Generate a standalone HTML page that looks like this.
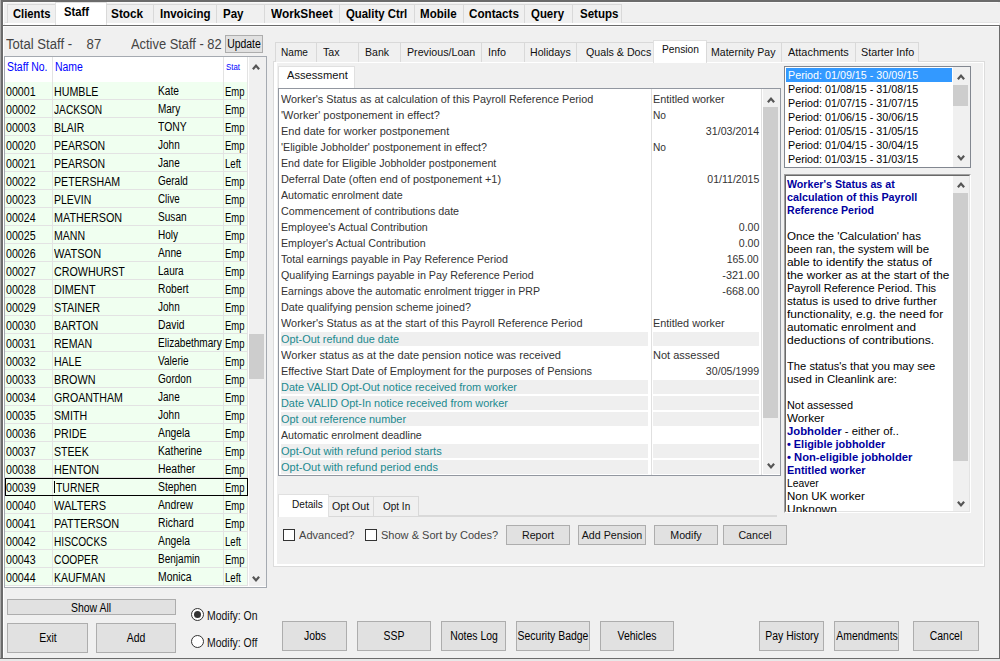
<!DOCTYPE html>
<html><head><meta charset="utf-8"><title>Staff</title>
<style>
*{box-sizing:border-box;margin:0;padding:0}
html,body{width:1000px;height:661px;overflow:hidden;background:#f0f0f0}
body{font-family:"Liberation Sans",sans-serif;font-size:11px;color:#000;position:relative}
.a{position:absolute}
.t{position:absolute;white-space:nowrap;transform-origin:0 50%}
.tab{position:absolute;border:1px solid #d9d9d9;background:#f0f0f0;white-space:nowrap;overflow:hidden}
.tt{top:4px;height:19px;font-weight:bold;font-size:13px;line-height:17px;padding-left:5px;border-bottom:none}
.it{top:42px;height:20px;font-size:11px;line-height:19px;padding-left:6px;border-bottom:none;color:#111}
.btn{position:absolute;border:1px solid #adadad;background:#e1e1e1;text-align:center;white-space:nowrap;font-size:12px;color:#000;overflow:hidden}
.row{position:absolute;left:5px;width:242px;height:18px;background:#f0fff0;border-bottom:1px solid #e3e3e3;font-size:12px;line-height:18px;color:#000}
.row span{position:absolute;top:1px;white-space:nowrap;transform-origin:0 50%}
.pr{position:absolute;left:279px;width:482px;height:16px;font-size:11px;line-height:16px;color:#333;white-space:nowrap}
.pr span{position:absolute;top:0;transform-origin:0 50%}
.g1{position:absolute;left:2px;top:1px;width:367px;height:14px;background:#efefef}
.g2{position:absolute;left:374px;top:1px;width:106px;height:14px;background:#efefef}
.hl{position:absolute;left:1px;height:13px;line-height:13px;font-size:11px;white-space:nowrap;color:#000;transform-origin:0 50%}
.hl b{color:#0000a0}
.pl{position:absolute;left:786px;width:166px;height:14px;line-height:14px;font-size:11px;padding-left:2px;white-space:nowrap;color:#000}
</style></head><body>

<div class="a" style="left:0;top:0;width:1000px;height:2px;background:#6b6b6b"></div>
<div class="a" style="left:0;top:0;width:1px;height:661px;background:#aaa"></div>
<div class="a" style="left:1px;top:0;width:2px;height:661px;background:#6b6b6b"></div>
<div class="a" style="left:3px;top:2px;width:1px;height:656px;background:#fff"></div>
<div class="a" style="left:3px;top:2px;width:995px;height:1px;background:#fafafa"></div>
<div class="a" style="left:0;top:658px;width:1000px;height:1px;background:#6b6b6b"></div>
<div class="a" style="left:0;top:659px;width:1000px;height:2px;background:#e8e8e8"></div>
<div class="a" style="left:999px;top:25px;width:1px;height:634px;background:#6b6b6b"></div>
<div class="a" style="left:5px;top:22px;width:994px;height:1px;background:#e4e4e4"></div>
<div class="a" style="left:5px;top:23px;width:994px;height:2px;background:#fff"></div>
<div class="a" style="left:3px;top:25px;width:997px;height:1px;background:#6b6b6b"></div>
<div class="a" style="left:4px;top:26px;width:995px;height:1px;background:#fbfbfb"></div>
<div class="tab tt" style="left:7px;width:50px"><span class="t" style="left:5.0px;top:0;transform:scaleX(0.863)">Clients</span></div>
<div class="tab tt" style="left:55px;width:52px;top:2px;height:23px;background:#fff;border-color:#e0e0e0;line-height:18px;padding-top:1px"><span class="t" style="left:7.6px;top:0;transform:scaleX(0.865)">Staff</span></div>
<div class="tab tt" style="left:106px;width:48px"><span class="t" style="left:4.4px;top:0;transform:scaleX(0.909)">Stock</span></div>
<div class="tab tt" style="left:153px;width:64px"><span class="t" style="left:6.0px;top:0;transform:scaleX(0.885)">Invoicing</span></div>
<div class="tab tt" style="left:216px;width:49px"><span class="t" style="left:6.2px;top:0;transform:scaleX(0.886)">Pay</span></div>
<div class="tab tt" style="left:264px;width:76px"><span class="t" style="left:6.4px;top:0;transform:scaleX(0.910)">WorkSheet</span></div>
<div class="tab tt" style="left:339px;width:76px"><span class="t" style="left:5.8px;top:0;transform:scaleX(0.874)">Quality Ctrl</span></div>
<div class="tab tt" style="left:414px;width:50px"><span class="t" style="left:5.4px;top:0;transform:scaleX(0.889)">Mobile</span></div>
<div class="tab tt" style="left:463px;width:62px"><span class="t" style="left:5.0px;top:0;transform:scaleX(0.899)">Contacts</span></div>
<div class="tab tt" style="left:524px;width:49px"><span class="t" style="left:6.0px;top:0;transform:scaleX(0.878)">Query</span></div>
<div class="tab tt" style="left:572px;width:50px"><span class="t" style="left:6.5px;top:0;transform:scaleX(0.888)">Setups</span></div>
<div class="t" style="left:6px;top:35px;font-size:14px;line-height:18px;color:#444"><span style="display:inline-block;transform:scaleX(0.936);transform-origin:0 50%">Total Staff - &nbsp;&nbsp; 87</span></div>
<div class="t" style="left:131px;top:35px;font-size:14px;line-height:18px;color:#444"><span style="display:inline-block;transform:scaleX(0.920);transform-origin:0 50%">Active Staff - 82</span></div>
<div class="btn" style="left:225px;top:35px;width:38px;height:18px;line-height:16px;font-size:12px"><span style="position:absolute;left:50%;top:0;transform:translateX(-50%) scaleX(0.870)">Update</span></div>
<div class="a" style="left:4px;top:56px;width:263px;height:532px;background:#fff;border:1px solid #a5aab1"></div>
<div class="a" style="left:249px;top:57px;width:17px;height:529px;background:#f0f0f0"></div>
<div class="t" style="left:7px;top:59px;font-size:12px;line-height:16px;color:#0000ff"><span style="display:inline-block;transform:scaleX(0.870);transform-origin:0 50%">Staff No.</span></div>
<div class="t" style="left:55px;top:59px;font-size:12px;line-height:16px;color:#0000ff"><span style="display:inline-block;transform:scaleX(0.870);transform-origin:0 50%">Name</span></div>
<div class="t" style="left:226px;top:61px;font-size:9px;line-height:12px;color:#0000ff"><span style="display:inline-block;transform:scaleX(0.870);transform-origin:0 50%">Stat</span></div>
<div class="row" style="top:82px"><span style="left:1px;transform:scaleX(0.887)">00001</span><span style="left:49px;transform:scaleX(0.889)">HUMBLE</span><span style="left:153px;top:0;transform:scaleX(0.849)">Kate</span><span style="left:220px;transform:scaleX(0.790)">Emp</span></div>
<div class="row" style="top:100px"><span style="left:1px;transform:scaleX(0.887)">00002</span><span style="left:49px;transform:scaleX(0.850)">JACKSON</span><span style="left:153px;top:0;transform:scaleX(0.832)">Mary</span><span style="left:220px;transform:scaleX(0.790)">Emp</span></div>
<div class="row" style="top:118px"><span style="left:1px;transform:scaleX(0.887)">00003</span><span style="left:49px;transform:scaleX(0.871)">BLAIR</span><span style="left:153px;top:0;transform:scaleX(0.866)">TONY</span><span style="left:220px;transform:scaleX(0.790)">Emp</span></div>
<div class="row" style="top:136px"><span style="left:1px;transform:scaleX(0.887)">00020</span><span style="left:49px;transform:scaleX(0.872)">PEARSON</span><span style="left:153px;top:0;transform:scaleX(0.834)">John</span><span style="left:220px;transform:scaleX(0.790)">Emp</span></div>
<div class="row" style="top:154px"><span style="left:1px;transform:scaleX(0.887)">00021</span><span style="left:49px;transform:scaleX(0.872)">PEARSON</span><span style="left:153px;top:0;transform:scaleX(0.834)">Jane</span><span style="left:220px;transform:scaleX(0.799)">Left</span></div>
<div class="row" style="top:172px"><span style="left:1px;transform:scaleX(0.887)">00022</span><span style="left:49px;transform:scaleX(0.885)">PETERSHAM</span><span style="left:153px;top:0;transform:scaleX(0.830)">Gerald</span><span style="left:220px;transform:scaleX(0.790)">Emp</span></div>
<div class="row" style="top:190px"><span style="left:1px;transform:scaleX(0.887)">00023</span><span style="left:49px;transform:scaleX(0.874)">PLEVIN</span><span style="left:153px;top:0;transform:scaleX(0.814)">Clive</span><span style="left:220px;transform:scaleX(0.790)">Emp</span></div>
<div class="row" style="top:208px"><span style="left:1px;transform:scaleX(0.887)">00024</span><span style="left:49px;transform:scaleX(0.899)">MATHERSON</span><span style="left:153px;top:0;transform:scaleX(0.843)">Susan</span><span style="left:220px;transform:scaleX(0.790)">Emp</span></div>
<div class="row" style="top:226px"><span style="left:1px;transform:scaleX(0.887)">00025</span><span style="left:49px;transform:scaleX(0.880)">MANN</span><span style="left:153px;top:0;transform:scaleX(0.837)">Holy</span><span style="left:220px;transform:scaleX(0.790)">Emp</span></div>
<div class="row" style="top:244px"><span style="left:1px;transform:scaleX(0.887)">00026</span><span style="left:49px;transform:scaleX(0.918)">WATSON</span><span style="left:153px;top:0;transform:scaleX(0.845)">Anne</span><span style="left:220px;transform:scaleX(0.790)">Emp</span></div>
<div class="row" style="top:262px"><span style="left:1px;transform:scaleX(0.887)">00027</span><span style="left:49px;transform:scaleX(0.894)">CROWHURST</span><span style="left:153px;top:0;transform:scaleX(0.837)">Laura</span><span style="left:220px;transform:scaleX(0.790)">Emp</span></div>
<div class="row" style="top:280px"><span style="left:1px;transform:scaleX(0.887)">00028</span><span style="left:49px;transform:scaleX(0.902)">DIMENT</span><span style="left:153px;top:0;transform:scaleX(0.852)">Robert</span><span style="left:220px;transform:scaleX(0.790)">Emp</span></div>
<div class="row" style="top:298px"><span style="left:1px;transform:scaleX(0.887)">00029</span><span style="left:49px;transform:scaleX(0.900)">STAINER</span><span style="left:153px;top:0;transform:scaleX(0.834)">John</span><span style="left:220px;transform:scaleX(0.790)">Emp</span></div>
<div class="row" style="top:316px"><span style="left:1px;transform:scaleX(0.887)">00030</span><span style="left:49px;transform:scaleX(0.894)">BARTON</span><span style="left:153px;top:0;transform:scaleX(0.864)">David</span><span style="left:220px;transform:scaleX(0.790)">Emp</span></div>
<div class="row" style="top:334px"><span style="left:1px;transform:scaleX(0.887)">00031</span><span style="left:49px;transform:scaleX(0.879)">REMAN</span><span style="left:153px;top:0;transform:scaleX(0.838)">Elizabethmary</span><span style="left:220px;transform:scaleX(0.790)">Emp</span></div>
<div class="row" style="top:352px"><span style="left:1px;transform:scaleX(0.887)">00032</span><span style="left:49px;transform:scaleX(0.877)">HALE</span><span style="left:153px;top:0;transform:scaleX(0.842)">Valerie</span><span style="left:220px;transform:scaleX(0.790)">Emp</span></div>
<div class="row" style="top:370px"><span style="left:1px;transform:scaleX(0.887)">00033</span><span style="left:49px;transform:scaleX(0.902)">BROWN</span><span style="left:153px;top:0;transform:scaleX(0.837)">Gordon</span><span style="left:220px;transform:scaleX(0.790)">Emp</span></div>
<div class="row" style="top:388px"><span style="left:1px;transform:scaleX(0.887)">00034</span><span style="left:49px;transform:scaleX(0.883)">GROANTHAM</span><span style="left:153px;top:0;transform:scaleX(0.834)">Jane</span><span style="left:220px;transform:scaleX(0.790)">Emp</span></div>
<div class="row" style="top:406px"><span style="left:1px;transform:scaleX(0.887)">00035</span><span style="left:49px;transform:scaleX(0.886)">SMITH</span><span style="left:153px;top:0;transform:scaleX(0.834)">John</span><span style="left:220px;transform:scaleX(0.790)">Emp</span></div>
<div class="row" style="top:424px"><span style="left:1px;transform:scaleX(0.887)">00036</span><span style="left:49px;transform:scaleX(0.886)">PRIDE</span><span style="left:153px;top:0;transform:scaleX(0.859)">Angela</span><span style="left:220px;transform:scaleX(0.790)">Emp</span></div>
<div class="row" style="top:442px"><span style="left:1px;transform:scaleX(0.887)">00037</span><span style="left:49px;transform:scaleX(0.882)">STEEK</span><span style="left:153px;top:0;transform:scaleX(0.855)">Katherine</span><span style="left:220px;transform:scaleX(0.790)">Emp</span></div>
<div class="row" style="top:460px"><span style="left:1px;transform:scaleX(0.887)">00038</span><span style="left:49px;transform:scaleX(0.894)">HENTON</span><span style="left:153px;top:0;transform:scaleX(0.871)">Heather</span><span style="left:220px;transform:scaleX(0.790)">Emp</span></div>
<div class="row" style="top:478px"><span style="left:1px;transform:scaleX(0.887)">00039</span><span style="left:51px;transform:scaleX(0.868)">TURNER</span><span style="left:153px;top:0;transform:scaleX(0.863)">Stephen</span><span style="left:220px;transform:scaleX(0.790)">Emp</span></div>
<div class="row" style="top:496px"><span style="left:1px;transform:scaleX(0.887)">00040</span><span style="left:49px;transform:scaleX(0.919)">WALTERS</span><span style="left:153px;top:0;transform:scaleX(0.858)">Andrew</span><span style="left:220px;transform:scaleX(0.790)">Emp</span></div>
<div class="row" style="top:514px"><span style="left:1px;transform:scaleX(0.887)">00041</span><span style="left:49px;transform:scaleX(0.912)">PATTERSON</span><span style="left:153px;top:0;transform:scaleX(0.863)">Richard</span><span style="left:220px;transform:scaleX(0.790)">Emp</span></div>
<div class="row" style="top:532px"><span style="left:1px;transform:scaleX(0.887)">00042</span><span style="left:49px;transform:scaleX(0.845)">HISCOCKS</span><span style="left:153px;top:0;transform:scaleX(0.859)">Angela</span><span style="left:220px;transform:scaleX(0.799)">Left</span></div>
<div class="row" style="top:550px"><span style="left:1px;transform:scaleX(0.887)">00043</span><span style="left:49px;transform:scaleX(0.852)">COOPER</span><span style="left:153px;top:0;transform:scaleX(0.837)">Benjamin</span><span style="left:220px;transform:scaleX(0.790)">Emp</span></div>
<div class="row" style="top:568px"><span style="left:1px;transform:scaleX(0.887)">00044</span><span style="left:49px;transform:scaleX(0.874)">KAUFMAN</span><span style="left:153px;top:0;transform:scaleX(0.866)">Monica</span><span style="left:220px;transform:scaleX(0.799)">Left</span></div>
<div class="a" style="left:52px;top:57px;width:1px;height:529px;background:#e3e3e3"></div>
<div class="a" style="left:223px;top:57px;width:1px;height:529px;background:#e3e3e3"></div>
<div class="a" style="left:247px;top:57px;width:1px;height:529px;background:#e3e3e3"></div>
<div class="a" style="left:5px;top:478px;width:243px;height:18px;border:1px solid #000"></div>
<div class="a" style="left:54px;top:481px;width:1px;height:12px;background:#000"></div>
<div class="a" style="left:251.3px;top:63.1px"><svg width="10" height="8" viewBox="0 0 10 8" style="display:block"><path d="M1.9 6.3 L5 2.6 L8.1 6.3" fill="none" stroke="#555" stroke-width="2.2"/></svg></div>
<div class="a" style="left:251.3px;top:574.5px"><svg width="10" height="8" viewBox="0 0 10 8" style="display:block"><path d="M1.9 1.7 L5 5.4 L8.1 1.7" fill="none" stroke="#555" stroke-width="2.2"/></svg></div>
<div class="a" style="left:249px;top:334px;width:15px;height:45px;background:#cdcdcd"></div>
<div class="btn" style="left:7px;top:599px;width:169px;height:16px;line-height:16px"><span style="position:absolute;left:-1px;top:0;width:100%;height:100%"><span style="position:absolute;left:50%;top:0;transform:translateX(-50%) scaleX(0.870)">Show All</span></span></div>
<div class="btn" style="left:7px;top:623px;width:81px;height:30px;line-height:28px"><span style="position:absolute;left:50%;top:0;transform:translateX(-50%) scaleX(0.870)">Exit</span></div>
<div class="btn" style="left:96px;top:623px;width:80px;height:30px;line-height:28px"><span style="position:absolute;left:50%;top:0;transform:translateX(-50%) scaleX(0.870)">Add</span></div>
<div class="a" style="left:191px;top:608px;width:13px;height:13px;border:1px solid #333;border-radius:50%;background:#fff"></div>
<div class="a" style="left:194px;top:611px;width:7px;height:7px;border-radius:50%;background:#333"></div>
<div class="a" style="left:191px;top:635px;width:13px;height:13px;border:1px solid #333;border-radius:50%;background:#fff"></div>
<div class="t" style="left:207px;top:608px;font-size:12px;line-height:16px;color:#111"><span style="display:inline-block;transform:scaleX(0.870);transform-origin:0 50%">Modify: On</span></div>
<div class="t" style="left:207px;top:635px;font-size:12px;line-height:16px;color:#111"><span style="display:inline-block;transform:scaleX(0.870);transform-origin:0 50%">Modify: Off</span></div>
<div class="a" style="left:273px;top:61px;width:712px;height:506px;border:1px solid #dcdcdc;background:#fff"></div>
<div class="a" style="left:277px;top:63px;width:706px;height:501px;background:#f0f0f0"></div>
<div class="tab it" style="left:275px;width:42px"><span class="t" style="left:5.1px;top:0;transform:scaleX(0.917)">Name</span></div>
<div class="tab it" style="left:316px;width:43px"><span class="t" style="left:6.1px;top:0;transform:scaleX(0.969)">Tax</span></div>
<div class="tab it" style="left:358px;width:43px"><span class="t" style="left:6.1px;top:0;transform:scaleX(0.957)">Bank</span></div>
<div class="tab it" style="left:400px;width:82px"><span class="t" style="left:6.1px;top:0;transform:scaleX(0.970)">Previous/Loan</span></div>
<div class="tab it" style="left:481px;width:44px"><span class="t" style="left:5.5px;top:0;transform:scaleX(0.980)">Info</span></div>
<div class="tab it" style="left:524px;width:53px"><span class="t" style="left:5.0px;top:0;transform:scaleX(0.966)">Holidays</span></div>
<div class="tab it" style="left:576px;width:78px"><span class="t" style="left:8.5px;top:0;transform:scaleX(0.970)">Quals &amp; Docs</span></div>
<div class="tab it" style="left:653px;width:54px;top:40px;height:23px;background:#fff;border-color:#e0e0e0;line-height:17px"><span class="t" style="left:7.8px;top:0;transform:scaleX(0.930)">Pension</span></div>
<div class="tab it" style="left:706px;width:76px"><span class="t" style="left:4.2px;top:0;transform:scaleX(0.959)">Maternity Pay</span></div>
<div class="tab it" style="left:781px;width:75px"><span class="t" style="left:6.0px;top:0;transform:scaleX(0.994)">Attachments</span></div>
<div class="tab it" style="left:855px;width:64px"><span class="t" style="left:5.2px;top:0;transform:scaleX(0.978)">Starter Info</span></div>
<div class="tab" style="left:278px;top:66px;width:77px;height:23px;background:#fff;border-color:#e0e0e0;border-bottom:none;font-size:11px;line-height:17px;padding-left:8px;color:#111"><span style="display:inline-block;transform:scaleX(1.014);transform-origin:0 50%">Assessment</span></div>
<div class="a" style="left:278px;top:88px;width:503px;height:388px;background:#fff;border:1px solid #9297a0"></div>
<div class="a" style="left:651px;top:89px;width:1px;height:386px;background:#e0e0e0"></div>
<div class="a" style="left:761px;top:89px;width:1px;height:386px;background:#e0e0e0"></div>
<div class="a" style="left:763px;top:89px;width:17px;height:385px;background:#f0f0f0"></div>
<div class="a" style="left:765.5px;top:95.6px"><svg width="10" height="8" viewBox="0 0 10 8" style="display:block"><path d="M1.9 6.3 L5 2.6 L8.1 6.3" fill="none" stroke="#555" stroke-width="2.2"/></svg></div>
<div class="a" style="left:765.5px;top:462.1px"><svg width="10" height="8" viewBox="0 0 10 8" style="display:block"><path d="M1.9 1.7 L5 5.4 L8.1 1.7" fill="none" stroke="#555" stroke-width="2.2"/></svg></div>
<div class="a" style="left:763px;top:107px;width:15px;height:311px;background:#cdcdcd"></div>
<div class="pr" style="top:91px;"><span style="left:2px;transform:scaleX(0.986)">Worker&#39;s Status as at calculation of this Payroll Reference Period</span><span style="left:374px;transform:scaleX(0.985)">Entitled worker</span></div>
<div class="pr" style="top:107px;"><span style="left:2px;transform:scaleX(0.995)">&#39;Worker&#39; postponement in effect?</span><span style="left:374px;transform:scaleX(0.924)">No</span></div>
<div class="pr" style="top:123px;"><span style="left:2px;transform:scaleX(0.997)">End date for worker postponement</span><span style="right:2px;transform-origin:100% 50%;transform:scaleX(0.966)">31/03/2014</span></div>
<div class="pr" style="top:139px;"><span style="left:2px;transform:scaleX(0.975)">&#39;Eligible Jobholder&#39; postponement in effect?</span><span style="left:374px;transform:scaleX(0.924)">No</span></div>
<div class="pr" style="top:155px;"><span style="left:2px;transform:scaleX(0.967)">End date for Eligible Jobholder postponement</span></div>
<div class="pr" style="top:171px;"><span style="left:2px;transform:scaleX(0.990)">Deferral Date (often end of postponement +1)</span><span style="right:2px;transform-origin:100% 50%;transform:scaleX(0.957)">01/11/2015</span></div>
<div class="pr" style="top:187px;"><span style="left:2px;transform:scaleX(0.971)">Automatic enrolment date</span></div>
<div class="pr" style="top:203px;"><span style="left:2px;transform:scaleX(0.974)">Commencement of contributions date</span></div>
<div class="pr" style="top:219px;"><span style="left:2px;transform:scaleX(0.966)">Employee&#39;s Actual Contribution</span><span style="right:2px;transform-origin:100% 50%;transform:scaleX(0.966)">0.00</span></div>
<div class="pr" style="top:235px;"><span style="left:2px;transform:scaleX(0.968)">Employer&#39;s Actual Contribution</span><span style="right:2px;transform-origin:100% 50%;transform:scaleX(0.966)">0.00</span></div>
<div class="pr" style="top:251px;"><span style="left:2px;transform:scaleX(0.977)">Total earnings payable in Pay Reference Period</span><span style="right:2px;transform-origin:100% 50%;transform:scaleX(0.951)">165.00</span></div>
<div class="pr" style="top:267px;"><span style="left:2px;transform:scaleX(0.975)">Qualifying Earnings payable in Pay Reference Period</span><span style="right:2px;transform-origin:100% 50%;transform:scaleX(0.992)">-321.00</span></div>
<div class="pr" style="top:283px;"><span style="left:2px;transform:scaleX(0.963)">Earnings above the automatic enrolment trigger in PRP</span><span style="right:2px;transform-origin:100% 50%;transform:scaleX(0.992)">-668.00</span></div>
<div class="pr" style="top:299px;"><span style="left:2px;transform:scaleX(0.977)">Date qualifying pension scheme joined?</span></div>
<div class="pr" style="top:315px;"><span style="left:2px;transform:scaleX(0.990)">Worker&#39;s Status as at the start of this Payroll Reference Period</span><span style="left:374px;transform:scaleX(0.985)">Entitled worker</span></div>
<div class="pr" style="top:331px;color:#1b8a8f;"><div class="g1"></div><div class="g2"></div><span style="left:2px;transform:scaleX(0.990)">Opt-Out refund due date</span></div>
<div class="pr" style="top:347px;"><span style="left:2px;transform:scaleX(1.005)">Worker status as at the date pension notice was received</span><span style="left:374px;transform:scaleX(1.001)">Not assessed</span></div>
<div class="pr" style="top:363px;"><span style="left:2px;transform:scaleX(0.990)">Effective Start Date of Employment for the purposes of Pensions</span><span style="right:2px;transform-origin:100% 50%;transform:scaleX(0.966)">30/05/1999</span></div>
<div class="pr" style="top:379px;color:#1b8a8f;"><div class="g1"></div><div class="g2"></div><span style="left:2px;transform:scaleX(0.993)">Date VALID Opt-Out notice received from worker</span></div>
<div class="pr" style="top:395px;color:#1b8a8f;"><div class="g1"></div><div class="g2"></div><span style="left:2px;transform:scaleX(0.991)">Date VALID Opt-In notice received from worker</span></div>
<div class="pr" style="top:411px;color:#1b8a8f;"><div class="g1"></div><div class="g2"></div><span style="left:2px;transform:scaleX(0.993)">Opt out reference number</span></div>
<div class="pr" style="top:427px;"><span style="left:2px;transform:scaleX(0.967)">Automatic enrolment deadline</span></div>
<div class="pr" style="top:443px;color:#1b8a8f;"><div class="g1"></div><div class="g2"></div><span style="left:2px;transform:scaleX(1.007)">Opt-Out with refund period starts</span></div>
<div class="pr" style="top:459px;color:#1b8a8f;"><div class="g1"></div><div class="g2"></div><span style="left:2px;transform:scaleX(1.003)">Opt-Out with refund period ends</span></div>
<div class="a" style="left:278px;top:515px;width:499px;height:2px;background:#d9d9d9"></div>
<div class="tab" style="left:328px;top:496px;width:46px;height:20px;font-size:11px;line-height:18px;padding-left:3px;border-bottom:none;color:#111"><span style="display:inline-block;transform:scaleX(0.965);transform-origin:0 50%">Opt Out</span></div>
<div class="tab" style="left:373px;top:496px;width:46px;height:20px;font-size:11px;line-height:18px;padding-left:9px;border-bottom:none;color:#111"><span style="display:inline-block;transform:scaleX(0.908);transform-origin:0 50%">Opt In</span></div>
<div class="tab" style="left:278px;top:494px;width:51px;height:23px;background:#fff;border-color:#e0e0e0;border-bottom:none;font-size:11px;line-height:19px;padding-left:13px;color:#111"><span style="display:inline-block;transform:scaleX(0.916);transform-origin:0 50%">Details</span></div>
<div class="a" style="left:283px;top:529px;width:12px;height:12px;border:1px solid #333;background:#fff"></div>
<div class="t" style="left:299px;top:528px;font-size:11px;line-height:15px;color:#444"><span style="display:inline-block;transform:scaleX(1.006);transform-origin:0 50%">Advanced?</span></div>
<div class="a" style="left:365px;top:529px;width:12px;height:12px;border:1px solid #333;background:#fff"></div>
<div class="t" style="left:381px;top:528px;font-size:11px;line-height:15px;color:#444"><span style="display:inline-block;transform:scaleX(1.002);transform-origin:0 50%">Show &amp; Sort by Codes?</span></div>
<div class="btn" style="left:506px;top:525px;width:64px;height:20px;line-height:18px;font-size:11px;color:#111"><span style="position:absolute;left:50%;top:0;transform:translateX(-50%) scaleX(0.970)">Report</span></div>
<div class="btn" style="left:578px;top:525px;width:68px;height:20px;line-height:18px;font-size:11px;color:#111"><span style="position:absolute;left:50%;top:0;transform:translateX(-50%) scaleX(0.970)">Add Pension</span></div>
<div class="btn" style="left:654px;top:525px;width:64px;height:20px;line-height:18px;font-size:11px;color:#111"><span style="position:absolute;left:50%;top:0;transform:translateX(-50%) scaleX(0.970)">Modify</span></div>
<div class="btn" style="left:723px;top:525px;width:64px;height:20px;line-height:18px;font-size:11px;color:#111"><span style="position:absolute;left:50%;top:0;transform:translateX(-50%) scaleX(0.970)">Cancel</span></div>
<div class="a" style="left:784px;top:66px;width:187px;height:102px;background:#fff;border:1px solid #828790;overflow:hidden"></div>
<div class="pl" style="top:68px;background:#3399ff;color:#fff;"><span style="display:inline-block;transform:scaleX(0.976);transform-origin:0 50%">Period: 01/09/15 - 30/09/15</span></div>
<div class="pl" style="top:82px;"><span style="display:inline-block;transform:scaleX(0.976);transform-origin:0 50%">Period: 01/08/15 - 31/08/15</span></div>
<div class="pl" style="top:96px;"><span style="display:inline-block;transform:scaleX(0.976);transform-origin:0 50%">Period: 01/07/15 - 31/07/15</span></div>
<div class="pl" style="top:110px;"><span style="display:inline-block;transform:scaleX(0.976);transform-origin:0 50%">Period: 01/06/15 - 30/06/15</span></div>
<div class="pl" style="top:124px;"><span style="display:inline-block;transform:scaleX(0.976);transform-origin:0 50%">Period: 01/05/15 - 31/05/15</span></div>
<div class="pl" style="top:138px;"><span style="display:inline-block;transform:scaleX(0.976);transform-origin:0 50%">Period: 01/04/15 - 30/04/15</span></div>
<div class="pl" style="top:152px;"><span style="display:inline-block;transform:scaleX(0.976);transform-origin:0 50%">Period: 01/03/15 - 31/03/15</span></div>
<div class="a" style="left:953px;top:67px;width:17px;height:100px;background:#f0f0f0"></div>
<div class="a" style="left:955.6px;top:73.1px"><svg width="10" height="8" viewBox="0 0 10 8" style="display:block"><path d="M1.9 6.3 L5 2.6 L8.1 6.3" fill="none" stroke="#555" stroke-width="2.2"/></svg></div>
<div class="a" style="left:955.6px;top:154.1px"><svg width="10" height="8" viewBox="0 0 10 8" style="display:block"><path d="M1.9 1.7 L5 5.4 L8.1 1.7" fill="none" stroke="#555" stroke-width="2.2"/></svg></div>
<div class="a" style="left:953px;top:85px;width:15px;height:21px;background:#cdcdcd"></div>
<div class="a" style="left:784px;top:174px;width:187px;height:339px;background:#fff;border:1px solid #a0a0a0;border-right-color:#fff;border-bottom-color:#fff"></div>
<div class="a" style="left:785px;top:175px;width:185px;height:337px;border:1px solid #696969;border-right-color:#e3e3e3;border-bottom-color:#e3e3e3"></div>
<div class="a" style="left:953px;top:176px;width:16px;height:335px;background:#f0f0f0"></div>
<div class="a" style="left:955.6px;top:181.1px"><svg width="10" height="8" viewBox="0 0 10 8" style="display:block"><path d="M1.9 6.3 L5 2.6 L8.1 6.3" fill="none" stroke="#555" stroke-width="2.2"/></svg></div>
<div class="a" style="left:955.6px;top:500.3px"><svg width="10" height="8" viewBox="0 0 10 8" style="display:block"><path d="M1.9 1.7 L5 5.4 L8.1 1.7" fill="none" stroke="#555" stroke-width="2.2"/></svg></div>
<div class="a" style="left:953px;top:193px;width:15px;height:268px;background:#cdcdcd"></div>
<div class="a" style="left:786px;top:178px;width:166px;height:334px;overflow:hidden">
<div class="hl" style="top:0px;transform:scaleX(0.968)"><b>Worker's Status as at</b></div>
<div class="hl" style="top:13px;transform:scaleX(0.978)"><b>calculation of this Payroll</b></div>
<div class="hl" style="top:26px;transform:scaleX(0.961)"><b>Reference Period</b></div>
<div class="hl" style="top:52px;transform:scaleX(1.054)">Once the 'Calculation' has</div>
<div class="hl" style="top:65px;transform:scaleX(1.042)">been ran, the system will be</div>
<div class="hl" style="top:78px;transform:scaleX(1.082)">able to identify the status of</div>
<div class="hl" style="top:91px;transform:scaleX(1.070)">the worker as at the start of the</div>
<div class="hl" style="top:104px;transform:scaleX(1.001)">Payroll Reference Period. This</div>
<div class="hl" style="top:117px;transform:scaleX(1.062)">status is used to drive further</div>
<div class="hl" style="top:130px;transform:scaleX(1.088)">functionality, e.g. the need for</div>
<div class="hl" style="top:143px;transform:scaleX(1.065)">automatic enrolment and</div>
<div class="hl" style="top:156px;transform:scaleX(1.099)">deductions of contributions.</div>
<div class="hl" style="top:182px;transform:scaleX(1.017)">The status's that you may see</div>
<div class="hl" style="top:195px;transform:scaleX(1.040)">used in Cleanlink are:</div>
<div class="hl" style="top:221px;transform:scaleX(0.990)">Not assessed</div>
<div class="hl" style="top:234px;transform:scaleX(1.064)">Worker</div>
<div class="hl" style="top:247px;transform:scaleX(1.028)"><b>Jobholder</b> - either of..</div>
<div class="hl" style="top:260px;transform:scaleX(0.990)"><b>&bull; Eligible jobholder</b></div>
<div class="hl" style="top:273px;transform:scaleX(1.019)"><b>&bull; Non-eligible jobholder</b></div>
<div class="hl" style="top:286px;transform:scaleX(0.989)"><b>Entitled worker</b></div>
<div class="hl" style="top:299px;transform:scaleX(0.939)">Leaver</div>
<div class="hl" style="top:312px;transform:scaleX(1.043)">Non UK worker</div>
<div class="hl" style="top:325px;transform:scaleX(1.086)">Unknown</div>
</div>
<div class="btn" style="left:282px;top:621px;width:65px;height:30px;line-height:28px"><span style="position:absolute;left:50%;top:0;transform:translateX(-50%) scaleX(0.870)">Jobs</span></div>
<div class="btn" style="left:357px;top:621px;width:74px;height:30px;line-height:28px"><span style="position:absolute;left:50%;top:0;transform:translateX(-50%) scaleX(0.870)">SSP</span></div>
<div class="btn" style="left:441px;top:621px;width:65px;height:30px;line-height:28px"><span style="position:absolute;left:50%;top:0;transform:translateX(-50%) scaleX(0.870)">Notes Log</span></div>
<div class="btn" style="left:516px;top:621px;width:74px;height:30px;line-height:28px"><span style="position:absolute;left:50%;top:0;transform:translateX(-50%) scaleX(0.870)">Security Badge</span></div>
<div class="btn" style="left:600px;top:621px;width:74px;height:30px;line-height:28px"><span style="position:absolute;left:50%;top:0;transform:translateX(-50%) scaleX(0.870)">Vehicles</span></div>
<div class="btn" style="left:759px;top:621px;width:65px;height:30px;line-height:28px"><span style="position:absolute;left:50%;top:0;transform:translateX(-50%) scaleX(0.870)">Pay History</span></div>
<div class="btn" style="left:834px;top:621px;width:65px;height:30px;line-height:28px"><span style="position:absolute;left:50%;top:0;transform:translateX(-50%) scaleX(0.870)">Amendments</span></div>
<div class="btn" style="left:913px;top:621px;width:66px;height:30px;line-height:28px"><span style="position:absolute;left:50%;top:0;transform:translateX(-50%) scaleX(0.870)">Cancel</span></div>
</body></html>
